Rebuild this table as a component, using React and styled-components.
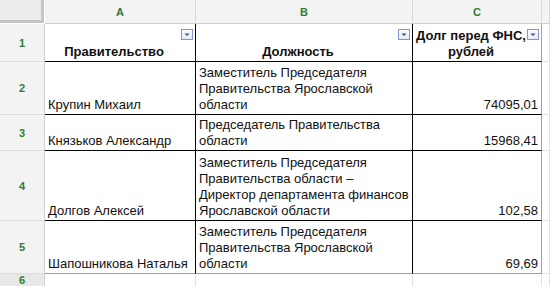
import React from "react";
import styled, { createGlobalStyle } from "styled-components";

const Global = createGlobalStyle`
  html, body { margin: 0; padding: 0; background: #fff; }
  body { font-family: "Liberation Sans", Arial, sans-serif; }
`;

const BLACK = "#000";
const GREEN = "#7cbd5c";
const GRID = "#e2e2e2";

const Sheet = styled.div`
  width: 550px;
  height: 286px;
  overflow: hidden;
  display: grid;
  grid-template-columns: 45px 151px 217px 129px 1fr;
  grid-template-rows: 24px 38px 53px 36px 70px 53px 1fr;
  font-family: "Liberation Sans", Arial, sans-serif;
  font-size: 13px;
  color: #111;
`;

const Corner = styled.div`
  box-sizing: border-box;
  background: #ececec;
  border-right: 3px solid #c6c6c6;
  border-bottom: 3px solid #c6c6c6;
  margin-right: 1px;
  margin-bottom: 1px;
`;

const ColHeader = styled.div`
  box-sizing: border-box;
  background: #f3f3f3;
  border-right: 1px solid #d9d9d9;
  border-bottom: 1px solid #cfcfcf;
  display: flex;
  align-items: center;
  justify-content: center;
  color: #2f7d2f;
  font-weight: bold;
  font-size: 11px;
`;

const RowHeader = styled.div`
  box-sizing: border-box;
  background: ${(p) => (p.$dim ? "#e8e8e8" : "#f3f3f3")};
  border-right: 1px solid #d0d0d0;
  border-bottom: 1px solid #dcdcdc;
  display: flex;
  align-items: center;
  justify-content: center;
  color: #2f7d2f;
  font-weight: bold;
  font-size: 11px;
`;

const Cell = styled.div`
  box-sizing: border-box;
  position: relative;
  border-right: 1px solid ${(p) => p.$br || GRID};
  border-bottom: 1px solid ${(p) => p.$bb || GRID};
  display: flex;
  flex-direction: column;
  justify-content: flex-end;
  align-items: ${(p) =>
    p.$align === "right" ? "flex-end" : p.$align === "center" ? "center" : "flex-start"};
  text-align: ${(p) => p.$align || "left"};
  padding: 2px ${(p) => (p.$filter ? "15px" : "3px")} 1px 3px;
  line-height: 16px;
  white-space: nowrap;
  font-weight: ${(p) => (p.$bold ? "bold" : "normal")};
`;

const FilterBox = styled.span`
  position: absolute;
  top: 4px;
  right: 2px;
  width: 12px;
  height: 11px;
  display: block;
`;

const FilterIcon = () => (
  <FilterBox>
    <svg width="12" height="11" viewBox="0 0 12 11">
      <defs>
        <linearGradient id="fg" x1="0" y1="0" x2="0" y2="1">
          <stop offset="0" stopColor="#ffffff" />
          <stop offset="1" stopColor="#e4e8f6" />
        </linearGradient>
      </defs>
      <rect x="0.5" y="0.5" width="11" height="10" fill="url(#fg)" stroke="#8795cf" />
      <path d="M3.5 4.5 H8.5 L6 7 Z" fill="#3b4a7a" />
    </svg>
  </FilterBox>
);

const Line = styled.span`
  display: block;
`;

const rows = [
  {
    n: 2,
    name: "Крупин Михаил",
    pos: ["Заместитель Председателя", "Правительства Ярославской", "области"],
    debt: "74095,01",
  },
  {
    n: 3,
    name: "Князьков Александр",
    pos: ["Председатель Правительства", "области"],
    debt: "15968,41",
  },
  {
    n: 4,
    name: "Долгов Алексей",
    pos: [
      "Заместитель Председателя",
      "Правительства области –",
      "Директор департамента финансов",
      "Ярославской области",
    ],
    debt: "102,58",
  },
  {
    n: 5,
    name: "Шапошникова Наталья",
    pos: ["Заместитель Председателя", "Правительства Ярославской", "области"],
    debt: "69,69",
  },
];

export default function App() {
  return (
    <>
      <Global />
      <Sheet>
        <Corner />
        <ColHeader>A</ColHeader>
        <ColHeader>B</ColHeader>
        <ColHeader>C</ColHeader>
        <ColHeader />

        <RowHeader>1</RowHeader>
        <Cell $br={BLACK} $bb={BLACK} $align="center" $bold $filter>
          Правительство
          <FilterIcon />
        </Cell>
        <Cell $br={BLACK} $bb={BLACK} $align="center" $bold $filter>
          Должность
          <FilterIcon />
        </Cell>
        <Cell $br={GREEN} $bb={BLACK} $align="center" $bold $filter>
          <Line>Долг перед ФНС,</Line>
          <Line>рублей</Line>
          <FilterIcon />
        </Cell>
        <Cell />

        {rows.map((r, i) => {
          const last = i === rows.length - 1;
          const bb = last ? GREEN : BLACK;
          return (
            <React.Fragment key={r.n}>
              <RowHeader>{r.n}</RowHeader>
              <Cell $br={BLACK} $bb={bb}>{r.name}</Cell>
              <Cell $br={BLACK} $bb={bb}>
                {r.pos.map((l) => (
                  <Line key={l}>{l}</Line>
                ))}
              </Cell>
              <Cell $br={GREEN} $bb={bb} $align="right">{r.debt}</Cell>
              <Cell />
            </React.Fragment>
          );
        })}

        <RowHeader $dim>6</RowHeader>
        <Cell />
        <Cell />
        <Cell />
        <Cell />
      </Sheet>
    </>
  );
}
